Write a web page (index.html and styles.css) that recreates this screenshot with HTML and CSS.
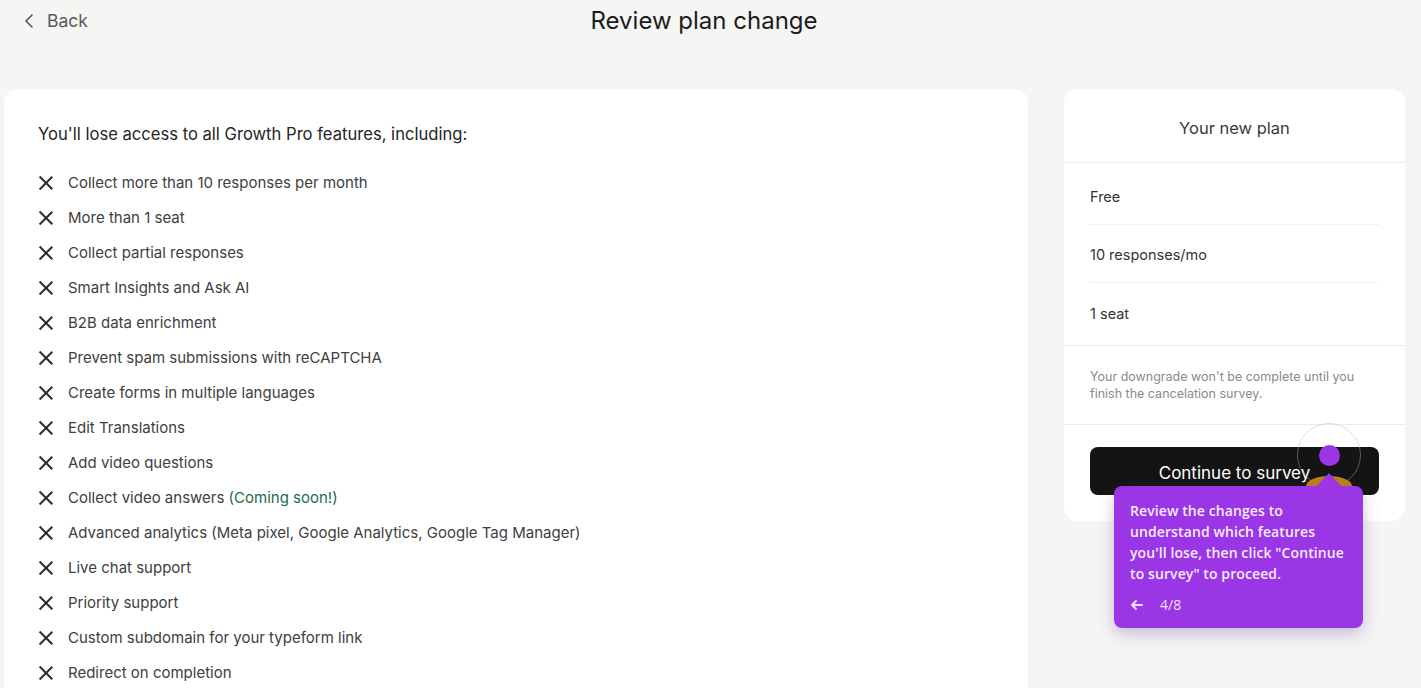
FILE: index.html
```html
<!DOCTYPE html>
<html lang="en">
<head>
  <meta charset="UTF-8">
  <meta name="viewport" content="width=device-width, initial-scale=1.0">
  <title>Review plan change</title>
  <link rel="stylesheet" href="styles.css">
</head>
<body>
  <header class="top-bar">
    <a class="back-link" href="#">
      <svg width="14" height="16" viewBox="0 0 14 16" fill="none" stroke="#555" stroke-width="1.6" stroke-linecap="round" stroke-linejoin="round"><path d="M9 2 L3 8 L9 14"/></svg>
      Back
    </a>
    <h1>Review plan change</h1>
  </header>

  <main class="layout">
    <section class="lose-card">
      <h2>You'll lose access to all Growth Pro features, including:</h2>
      <ul class="feature-list">
        <li><span class="x-icon"></span>Collect more than 10 responses per month</li>
        <li><span class="x-icon"></span>More than 1 seat</li>
        <li><span class="x-icon"></span>Collect partial responses</li>
        <li><span class="x-icon"></span>Smart Insights and Ask AI</li>
        <li><span class="x-icon"></span>B2B data enrichment</li>
        <li><span class="x-icon"></span>Prevent spam submissions with reCAPTCHA</li>
        <li><span class="x-icon"></span>Create forms in multiple languages</li>
        <li><span class="x-icon"></span>Edit Translations</li>
        <li><span class="x-icon"></span>Add video questions</li>
        <li><span class="x-icon"></span>Collect video answers&nbsp;<span class="soon">(Coming soon!)</span></li>
        <li><span class="x-icon"></span>Advanced analytics (Meta pixel, Google Analytics, Google Tag Manager)</li>
        <li><span class="x-icon"></span>Live chat support</li>
        <li><span class="x-icon"></span>Priority support</li>
        <li><span class="x-icon"></span>Custom subdomain for your typeform link</li>
        <li><span class="x-icon"></span>Redirect on completion</li>
      </ul>
    </section>

    <aside class="plan-card">
      <div class="plan-title">Your new plan</div>
      <ul class="plan-rows">
        <li>Free</li>
        <li>10 responses/mo</li>
        <li>1 seat</li>
      </ul>
      <p class="plan-note">Your downgrade won't be complete until you finish the cancelation survey.</p>
      <div class="plan-action">
        <button type="button">Continue to survey</button>
      </div>
    </aside>
  </main>

  <div class="tour-ring"></div>
  <div class="tour-glow"></div>
  <div class="tour-dot"></div>
  <div class="tour-tip">
    <p>Review the changes to understand which features you'll lose, then click "Continue to survey" to proceed.</p>
    <div class="tour-nav">
      <svg width="14" height="12" viewBox="0 0 14 12" fill="none" stroke="#f1e3fb" stroke-width="1.8" stroke-linecap="round" stroke-linejoin="round"><path d="M12 6 H2 M6 2 L2 6 L6 10"/></svg>
      <span>4/8</span>
    </div>
  </div>
</body>
</html>
```

FILE: styles.css
```css
* {
  margin: 0;
  padding: 0;
  box-sizing: border-box;
}

body {
  font-family: 'Inter', 'Liberation Sans', sans-serif;
  background: #f5f5f4;
  color: #3a3a3a;
  height: 688px;
  overflow: hidden;
  position: relative;
}

.top-bar {
  height: 89px;
  position: relative;
}

.back-link {
  position: absolute;
  left: 23px;
  top: 10px;
  display: flex;
  align-items: center;
  gap: 10px;
  font-size: 17.5px;
  color: #5a5a5a;
  text-decoration: none;
}

.top-bar h1 {
  text-align: center;
  font-size: 24px;
  font-weight: 400;
  color: #1c1c1c;
  padding: 6px 13px 0 0;
  line-height: 30px;
}

.layout {
  display: flex;
  gap: 36px;
  padding: 0 16px 0 4px;
  align-items: flex-start;
}

.lose-card {
  width: 1024px;
  height: 620px;
  background: #ffffff;
  border-radius: 14px;
  padding: 34px 34px;
}

.lose-card h2 {
  font-size: 16.6px;
  font-weight: 400;
  color: #262626;
  line-height: 22px;
  margin-bottom: 20px;
}

.feature-list {
  list-style: none;
}

.feature-list li {
  display: flex;
  align-items: center;
  height: 35px;
  font-size: 15px;
  color: #404040;
}

.x-icon {
  position: relative;
  width: 16px;
  height: 16px;
  margin: 0 14px 0 0;
}

.x-icon::before,
.x-icon::after {
  content: "";
  position: absolute;
  left: 7px;
  top: -1px;
  width: 1.6px;
  height: 18px;
  background: #2b2b2b;
  transform: rotate(45deg);
}

.x-icon::after {
  transform: rotate(-45deg);
}

.soon {
  color: #1d6b48;
}

.plan-card {
  width: 341px;
  background: #ffffff;
  border-radius: 14px;
}

.plan-title {
  height: 74px;
  display: flex;
  align-items: center;
  justify-content: center;
  padding-top: 4px;
  font-size: 16.5px;
  color: #3a3a3a;
  border-bottom: 1px solid #ececec;
}

.plan-rows {
  list-style: none;
  padding: 4px 26px;
  border-bottom: 1px solid #ececec;
}

.plan-rows li {
  height: 58px;
  display: flex;
  align-items: center;
  padding-top: 2px;
  font-size: 14.5px;
  color: #333333;
  border-bottom: 1px solid #f0f0f0;
}

.plan-rows li:last-child {
  border-bottom: none;
}

.plan-note {
  padding: 22px 26px 22px;
  font-size: 12.5px;
  line-height: 17px;
  color: #8a8a8a;
  border-bottom: 1px solid #ececec;
}

.plan-action {
  padding: 22px 26px 26px;
}

.plan-action button {
  width: 100%;
  height: 48px;
  padding-top: 4px;
  background: #141414;
  color: #ffffff;
  border: none;
  border-radius: 8px;
  font-family: inherit;
  font-size: 17px;
  cursor: pointer;
}

.tour-ring {
  position: absolute;
  left: 1297px;
  top: 423px;
  width: 64px;
  height: 64px;
  border-radius: 50%;
  border: 1px solid rgba(180, 170, 220, 0.45);
}

.tour-glow {
  position: absolute;
  left: 1306px;
  top: 476px;
  width: 46px;
  height: 20px;
  border-radius: 50% 50% 0 0;
  background: #c0801c;
}

.tour-dot {
  position: absolute;
  left: 1319px;
  top: 445px;
  width: 21px;
  height: 21px;
  border-radius: 50%;
  background: #9a36e6;
}

.tour-tip {
  position: absolute;
  left: 1114px;
  top: 486px;
  width: 249px;
  height: 142px;
  background: #9a36e6;
  border-radius: 8px;
  padding: 14px 14px 0 16px;
  color: #f6ecfd;
  box-shadow: 0 6px 16px rgba(90, 60, 140, 0.3);
  font-family: 'Open Sans', 'Noto Sans', sans-serif;
}

.tour-tip::before {
  content: "";
  position: absolute;
  left: 203px;
  top: -13px;
  border-left: 12px solid transparent;
  border-right: 12px solid transparent;
  border-bottom: 13px solid #9a36e6;
}

.tour-tip p {
  font-size: 14px;
  line-height: 21px;
  font-weight: 600;
  letter-spacing: 0.1px;
}

.tour-nav {
  display: flex;
  align-items: center;
  gap: 16px;
  margin-top: 11px;
  font-size: 14px;
  color: #f1e3fb;
}
```
